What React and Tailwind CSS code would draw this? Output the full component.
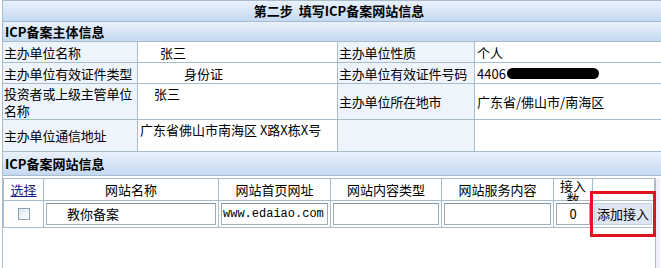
const font = { fontFamily: '"SimSun", "Noto Sans CJK SC", "Liberation Sans", sans-serif' };

function Label({ children, className = "" }) {
    return (
        <div className={`w-[135px] shrink-0 border-r border-[#a9bccb] bg-[#eef4fc] pl-[1px] flex items-center leading-[17px] tracking-[-0.2px] ${className}`}>
            {children}
        </div>
    );
}

function Value({ children, className = "" }) {
    return (
        <div className={`shrink-0 border-r border-[#a9bccb] bg-white px-[2px] flex items-center leading-[17px] ${className}`}>
            {children}
        </div>
    );
}

export default function App() {
    return (
        <div className="w-[661px] h-[268px] bg-white text-[13px] text-black overflow-hidden" style={font}>
            <div className="ml-[2px] border-l border-[#a9bccb]">
                <div className="h-[22px] border-y border-[#a9bccb] bg-gradient-to-b from-[#eaf2fb] to-[#c4d9f1] flex items-center justify-center font-bold pl-[14px]">
                    第二步&nbsp;&nbsp;填写ICP备案网站信息
                </div>
                <div className="h-[20px] border-b border-[#a9bccb] bg-gradient-to-b from-[#eaf2fb] to-[#c4d9f1] flex items-center px-[2px] font-bold">
                    ICP备案主体信息
                </div>

                <div className="flex h-[21px] border-b border-[#a9bccb]">
                    <Label className="whitespace-nowrap">主办单位名称</Label>
                    <Value className="w-[200px] pl-[22px]">张三</Value>
                    <Label className="w-[137px] whitespace-nowrap">主办单位性质</Label>
                    <Value className="flex-1 border-r-0">个人</Value>
                </div>
                <div className="flex h-[21px] border-b border-[#a9bccb]">
                    <Label className="whitespace-nowrap">主办单位有效证件类型</Label>
                    <Value className="w-[200px] pl-[46px]">身份证</Value>
                    <Label className="w-[137px] whitespace-nowrap">主办单位有效证件号码</Label>
                    <Value className="flex-1 border-r-0">
                        4406
                        <span className="inline-block w-[92px] h-[11px] rounded-full bg-black ml-[1px]"></span>
                    </Value>
                </div>
                <div className="flex h-[36px] border-b border-[#a9bccb]">
                    <Label className="items-start pt-[1px]">投资者或上级主管单位名称</Label>
                    <Value className="w-[200px] pl-[16px] items-start pt-[1px]">张三</Value>
                    <Label className="w-[137px] whitespace-nowrap">主办单位所在地市</Label>
                    <Value className="flex-1 border-r-0">广东省/佛山市/南海区</Value>
                </div>
                <div className="flex h-[32px] border-b border-[#a9bccb]">
                    <Label className="whitespace-nowrap">主办单位通信地址</Label>
                    <Value className="w-[200px] items-start pt-[1px] whitespace-nowrap">广东省佛山市南海区 X路X栋X号</Value>
                    <Label className="w-[137px]"></Label>
                    <Value className="flex-1 border-r-0"></Value>
                </div>

                <div className="h-[24px] border-b border-[#a9bccb] bg-gradient-to-b from-[#eaf2fb] to-[#c4d9f1] flex items-center px-[2px] font-bold">
                    ICP备案网站信息
                </div>

                <div className="h-[92px] pt-[2px] flex">
                    <div className="w-[652px]">
                        <div className="flex h-[23px] border border-[#a9bccb] text-center">
                            <div className="w-[40px] border-r border-[#a9bccb] flex items-center justify-center text-[#1a1a8c] underline">选择</div>
                            <div className="w-[175px] border-r border-[#a9bccb] flex items-center justify-center">网站名称</div>
                            <div className="w-[112px] border-r border-[#a9bccb] flex items-center justify-center">网站首页网址</div>
                            <div className="w-[111px] border-r border-[#a9bccb] flex items-center justify-center">网站内容类型</div>
                            <div className="w-[112px] border-r border-[#a9bccb] flex items-center justify-center">网站服务内容</div>
                            <div className="w-[39px] border-r border-[#a9bccb] flex justify-center leading-[13px] h-[22px] overflow-hidden">接入<br />数</div>
                            <div className="flex-1"></div>
                        </div>
                        <div className="flex h-[27px] border-x border-b border-[#a9bccb] items-center">
                            <div className="w-[40px] border-r border-[#a9bccb] h-full flex items-center justify-center">
                                <span className="w-[12px] h-[12px] border border-[#8aa0b4] bg-gradient-to-br from-[#dfe6ec] to-white"></span>
                            </div>
                            <div className="w-[175px] border-r border-[#a9bccb] h-full p-[2px]">
                                <div className="h-full border border-[#9aaebd] border-t-[#7f93a3] pl-[20px] flex items-center">教你备案</div>
                            </div>
                            <div className="w-[112px] border-r border-[#a9bccb] h-full p-[2px]">
                                <div className="h-full border border-[#9aaebd] border-t-[#7f93a3] px-[1px] flex items-center text-[12px]" style={{ fontFamily: '"Liberation Mono", monospace' }}>www.edaiao.com</div>
                            </div>
                            <div className="w-[111px] border-r border-[#a9bccb] h-full p-[2px]">
                                <div className="h-full border border-[#9aaebd] border-t-[#7f93a3]"></div>
                            </div>
                            <div className="w-[112px] border-r border-[#a9bccb] h-full p-[2px]">
                                <div className="h-full border border-[#9aaebd] border-t-[#7f93a3]"></div>
                            </div>
                            <div className="w-[39px] border-r border-[#a9bccb] h-full p-[2px]">
                                <div className="h-full border border-[#9aaebd] border-t-[#7f93a3] flex items-center justify-center">0</div>
                            </div>
                            <div className="flex-1 h-full relative">
                                <div className="absolute left-[1px] top-[2px] w-[58px] h-[22px] bg-[#dde6f2] border border-[#c4d0de] flex items-center justify-center">添加接入</div>
                                <div className="absolute left-[-3px] top-[-10px] w-[66px] h-[46px] border-[3px] border-[#e0141e]"></div>
                            </div>
                        </div>
                    </div>
                    <div className="w-[5px] border-l border-[#a9bccb] bg-[#eef2f6]"></div>
                </div>
            </div>
        </div>
    );
}
